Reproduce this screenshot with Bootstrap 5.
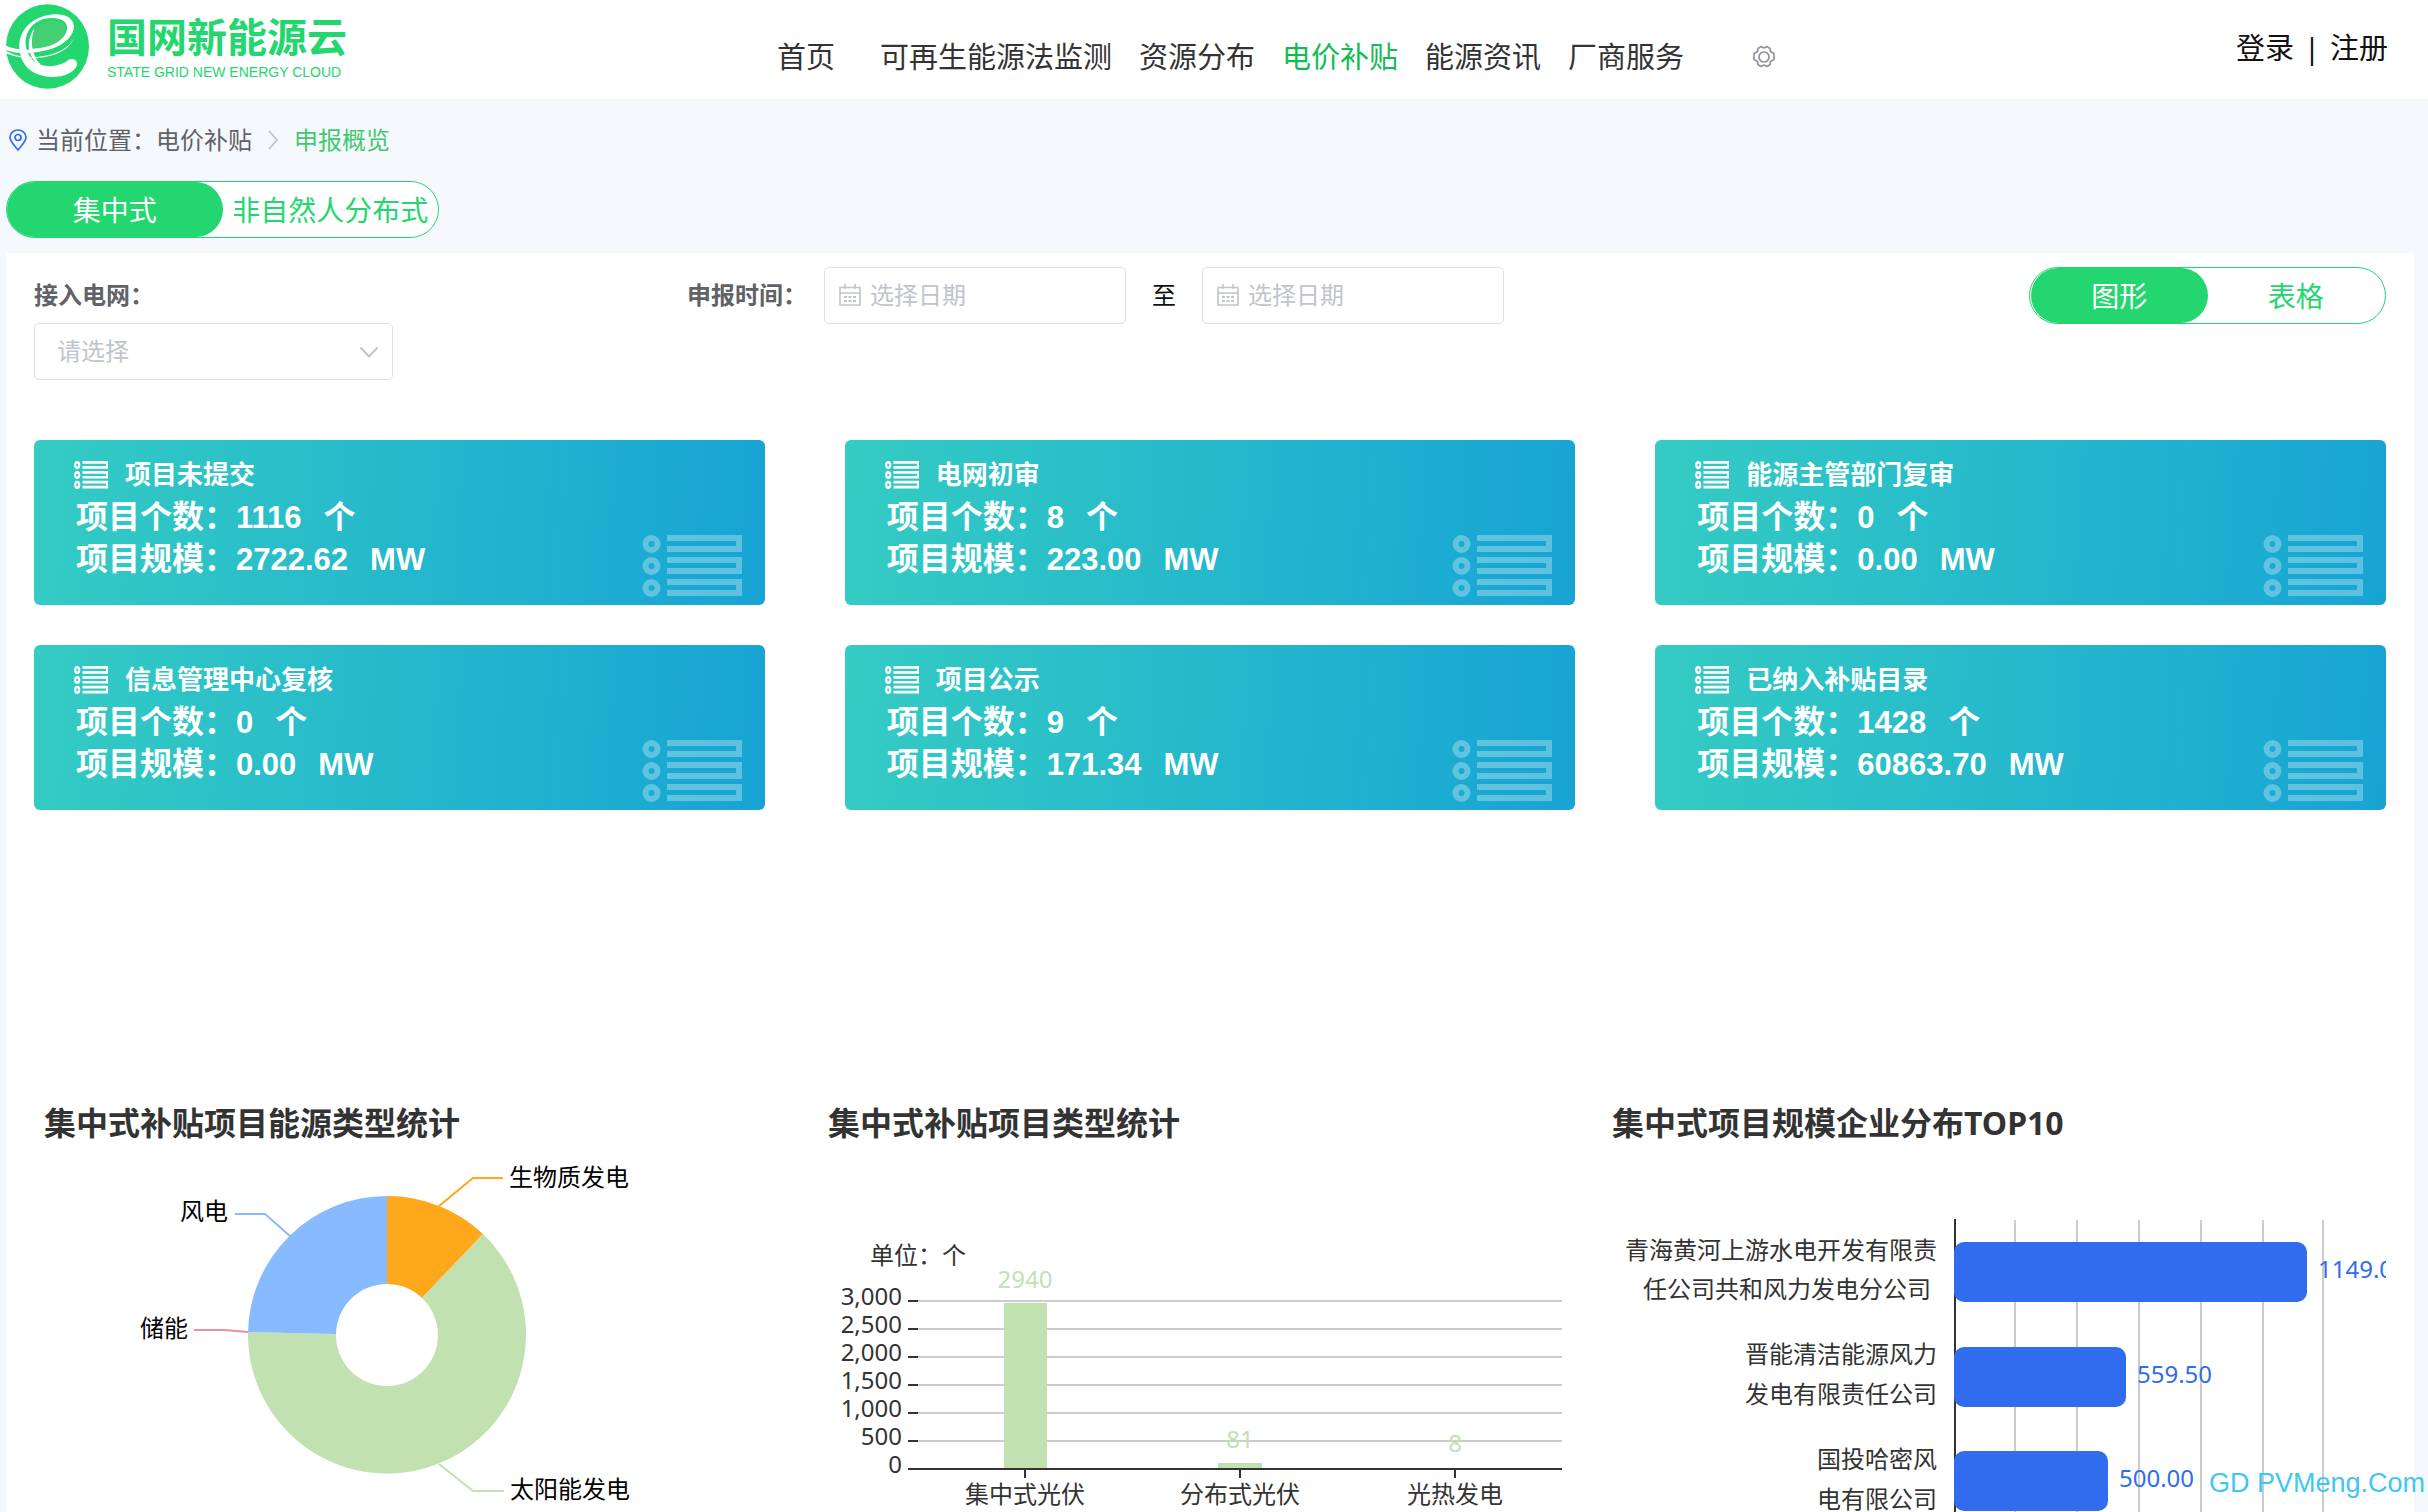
<!DOCTYPE html>
<html lang="zh-CN">
<head>
<meta charset="utf-8">
<meta name="viewport" content="width=device-width, initial-scale=1">
<title>国网新能源云 - 申报概览</title>
<link href="https://cdn.jsdelivr.net/npm/bootstrap@5.3.0/dist/css/bootstrap.min.css" rel="stylesheet">
<style>
:root { --brand: #24d66f; --ink: #333; --muted: #606266; --hint: #c0c4cc; --line: #dcdfe6; }
body { font-family: "Noto Sans", "Noto Sans CJK SC", sans-serif; font-size: 24px; line-height: 36px; color: #111; background: #f5f9fe; overflow-x: hidden; }
a { text-decoration: none; color: inherit; }
.site-head { height: 99px; background: #fff; }
.brand-box { width: 32%; padding: 4px 0 10px 6px; }
.brand-zh { font-size: 40px; line-height: 50px; font-weight: 700; color: var(--brand); }
.brand-en { font: 14px/20px "Liberation Sans", sans-serif; color: var(--brand); }
.brand-words { margin-left: 18px; }
.main-nav { gap: 27px; font-size: 29px; line-height: 44px; color: var(--ink); padding-top: 14px; }
.main-nav .home-link { margin-right: 18px; }
.main-nav .on { color: #12bb53; }
.gear { margin-left: 41px; }
.account { gap: 10px; font-size: 29px; line-height: 44px; padding-right: 40px; margin-bottom: 4px; }
.crumbs { height: 82px; padding-left: 8px; color: var(--muted); }
.crumbs .here { color: #43c870; }
.pill-group { height: 57px; border: 1px solid var(--brand); border-radius: 29px; background: #fff; font-size: 28px; }
.pill-group button { flex: 1 1 0; border: 0; background: none; color: var(--brand); border-radius: 29px; padding: 0; white-space: nowrap; }
.pill-group button.on { background: var(--brand); color: #fff; }
.pills-kind { width: 433px; margin-left: 6px; }
.pills-view { width: 357px; padding: 0 1px; }
.panel { background: #fff; margin: 15px 14px 0 6px; padding: 14px 28px 0; }
.filters label { font-weight: 700; color: var(--muted); line-height: 56px; }
.grid-filter { width: 653px; }
.field-box { height: 57px; border: 1px solid var(--line); border-radius: 5px; background-color: #fff; }
select.field-box { width: 359px; padding: 0 22px 2px; color: var(--hint); appearance: none;
  background: url("data:image/svg+xml,%3Csvg xmlns='http://www.w3.org/2000/svg' width='20' height='12'%3E%3Cpath d='M1.500 1.500l8.500 9 8.500-9' fill='none' stroke='%23c0c4cc' stroke-width='2'/%3E%3C/svg%3E") no-repeat right 13px center; }
.date-box { width: 302px; padding: 0 13px 2px; gap: 8px; }
.date-box input { border: 0; outline: 0; padding: 0; width: 100%; min-width: 0; background: none; }
.date-box input::placeholder { color: var(--hint); opacity: 1; }
.date-box svg { flex: none; }
.date-label { width: 137px; }
.filters .to-label { padding: 0 26px; font-weight: 400; color: #111; }
.stat-grid { grid-template-columns: repeat(3, 1fr); gap: 40px 80px; margin-top: 60px; }
.stat { position: relative; height: 165px; padding: 14px 42px; border-radius: 6px; color: #fff; font-weight: 700; font-size: 32px; line-height: 42px; background: linear-gradient(94deg, #34ccc3, #17a4d4); }
.stat h2 { font-size: 26px; line-height: 41px; font-weight: 700; margin: 0 0 0 -2px; gap: 17px; }
.stat b { font-family: "Liberation Sans", sans-serif; font-size: 31px; line-height: 1; }
.stat b + b, .stat b + span { margin-left: 22px; }
.stat .ghost { position: absolute; right: 23px; bottom: 8px; opacity: .3; }
.charts { margin-top: 291px; }
.charts h2 { font-size: 32px; line-height: 44px; font-weight: 700; color: var(--ink); margin: 0; padding-left: 10px; }
.charts svg { display: block; width: 100%; height: auto; }
svg text { font-size: 24px; }
.stamp { position: absolute; right: 3px; top: 1465px; font: 27px/36px "Liberation Sans", sans-serif; color: #3fc6f5; }
</style>
<script src="https://cdn.jsdelivr.net/npm/bootstrap@5.3.0/dist/js/bootstrap.bundle.min.js"></script>
</head>
<body class="position-relative">
<svg width="0" height="0" class="position-absolute" aria-hidden="true">
  <symbol id="list-mark" viewBox="0 0 100 62">
    <g id="list-row">
      <circle cx="9.500" cy="9" r="6" fill="none" stroke="#fff" stroke-width="6"/>
      <path d="M25 0h75v17H25v-6h69V6H25z" fill="#fff"/>
    </g>
    <use href="#list-row" y="22"/><use href="#list-row" y="44"/>
  </symbol>
  <symbol id="cal-mark" viewBox="0 0 22 22">
    <path d="M1 3.500h20V21H1zM1 9h20M6 0v5M16 0v5" fill="none" stroke="#c0c4cc" stroke-width="1.600"/>
    <path d="M5 13h12M5 17h12" stroke="#c0c4cc" stroke-width="2" stroke-dasharray="3 1.500"/>
  </symbol>
</svg>

<header class="site-head d-flex align-items-center">
  <a href="#" class="brand-box d-flex align-items-center">
    <svg width="83" height="85" viewBox="18 12 250 255" role="img" aria-label="国网新能源云">
      <defs><linearGradient id="sheen" x1="0" x2="1"><stop offset="0" stop-color="#fff"/><stop offset="1" stop-color="#fff" stop-opacity="0"/></linearGradient>
      <linearGradient id="sheen2" x1="0" x2="1"><stop offset="0" stop-color="#fff" stop-opacity="0"/><stop offset=".6" stop-color="#fff"/></linearGradient></defs>
      <ellipse cx="143" cy="139.500" rx="125" ry="127.500" fill="#24d66f"/>
      <path d="M92 142C86 100 112 68 150 63c32-4 50 8 47 32-4 28-40 50-105 47z" fill="#44cf72"/>
      <path d="M100 157c45-4 80-20 98-55-10 22-45 42-102 44z" fill="url(#sheen)"/>
      <path d="M18 150c25 8 45 11 70 9 70-5 122-28 134-72 5-30-22-48-65-44-62 6-106 50-98 110 5 42 35 70 80 77 45 5 80-8 92-32 5-14-8-26-24-19-9 10-22 15-40 18-45 8-78-12-88-52-8-40 12-78 56-89 34-8 68 2 67 28-2 36-48 62-112 65-25 1-52-2-72-12z" fill="#fff"/>
      <path d="M18 160c70 30 185 15 205-48-18 46-95 66-153 58-20-3-38-9-52-18z" fill="#fff"/>
      <path d="M104 84c-32 45-20 103 40 128-46-29-58-80-40-128z" fill="#fff"/>
      <path d="M110 202c28 6 55 2 86-14-18 22-60 34-86 14z" fill="url(#sheen2)"/>
    </svg>
    <span class="brand-words d-flex flex-column">
      <span class="brand-zh">国网新能源云</span>
      <span class="brand-en">STATE GRID NEW ENERGY CLOUD</span>
    </span>
  </a>
  <nav class="main-nav d-flex align-items-center text-nowrap" aria-label="主导航">
    <a href="#" class="home-link">首页</a>
    <a href="#">可再生能源法监测</a>
    <a href="#">资源分布</a>
    <a href="#" class="on">电价补贴</a>
    <a href="#">能源资讯</a>
    <a href="#">厂商服务</a>
    <a href="#" class="gear d-flex" aria-label="设置"><svg width="24" height="24" viewBox="0 0 24 24" fill="none" stroke="#909399" stroke-width="1.700"><circle cx="12" cy="12" r="5"/><path d="M9 1.500l3 1.500 3-1.500 3 2 .5 3 3.500 2v6l-3.500 2-.5 3-3 2-3-1.500-3 1.500-3-2-.5-3-3.500-2v-6l3.500-2 .5-3z" stroke-linejoin="round"/></svg></a>
  </nav>
  <div class="account d-flex ms-auto text-nowrap"><a href="#">登录</a><span>|</span><a href="#">注册</a></div>
</header>

<nav class="crumbs d-flex align-items-center" aria-label="当前位置">
  <svg width="20" height="22" viewBox="0 0 20 22" fill="none" stroke="#2f6fee" stroke-width="1.700"><path d="M10 21C5 15 2 12 2 8.500a8 7.500 0 0 1 16 0C18 12 15 15 10 21z"/><circle cx="10" cy="8.500" r="3"/></svg>
  <span class="ms-2">当前位置：</span><a href="#">电价补贴</a>
  <svg class="mx-3" width="10" height="20" viewBox="0 0 10 20" fill="none" stroke="#c0c4cc" stroke-width="1.800"><path d="M1 1l8 9-8 9"/></svg>
  <span class="here">申报概览</span>
</nav>
<div class="pill-group pills-kind d-flex">
  <button type="button" class="on">集中式</button><button type="button">非自然人分布式</button>
</div>

<main class="panel">
  <form class="filters d-flex align-items-start">
    <div class="grid-filter d-flex flex-column align-items-start">
      <label for="grid">接入电网：</label>
      <select id="grid" class="field-box"><option>请选择</option></select>
    </div>
    <label for="from" class="date-label">申报时间：</label>
    <div class="field-box date-box d-flex align-items-center"><svg width="24" height="22"><use href="#cal-mark"/></svg><input id="from" type="text" placeholder="选择日期"></div>
    <label for="to" class="to-label">至</label>
    <div class="field-box date-box d-flex align-items-center"><svg width="24" height="22"><use href="#cal-mark"/></svg><input id="to" type="text" placeholder="选择日期"></div>
    <div class="pill-group pills-view d-flex ms-auto">
      <button type="button" class="on">图形</button><button type="button">表格</button>
    </div>
  </form>

  <section class="stat-grid d-grid">
    <article class="stat"><h2 class="d-flex align-items-center"><svg width="34" height="28" viewBox="0 0 100 62" preserveAspectRatio="none"><use href="#list-mark" width="100" height="62"/></svg>项目未提交</h2><div>项目个数：<b>1116</b><span>个</span></div><div>项目规模：<b>2722.62</b><b>MW</b></div><svg class="ghost" width="100" height="62"><use href="#list-mark"/></svg></article>
    <article class="stat"><h2 class="d-flex align-items-center"><svg width="34" height="28" viewBox="0 0 100 62" preserveAspectRatio="none"><use href="#list-mark" width="100" height="62"/></svg>电网初审</h2><div>项目个数：<b>8</b><span>个</span></div><div>项目规模：<b>223.00</b><b>MW</b></div><svg class="ghost" width="100" height="62"><use href="#list-mark"/></svg></article>
    <article class="stat"><h2 class="d-flex align-items-center"><svg width="34" height="28" viewBox="0 0 100 62" preserveAspectRatio="none"><use href="#list-mark" width="100" height="62"/></svg>能源主管部门复审</h2><div>项目个数：<b>0</b><span>个</span></div><div>项目规模：<b>0.00</b><b>MW</b></div><svg class="ghost" width="100" height="62"><use href="#list-mark"/></svg></article>
    <article class="stat"><h2 class="d-flex align-items-center"><svg width="34" height="28" viewBox="0 0 100 62" preserveAspectRatio="none"><use href="#list-mark" width="100" height="62"/></svg>信息管理中心复核</h2><div>项目个数：<b>0</b><span>个</span></div><div>项目规模：<b>0.00</b><b>MW</b></div><svg class="ghost" width="100" height="62"><use href="#list-mark"/></svg></article>
    <article class="stat"><h2 class="d-flex align-items-center"><svg width="34" height="28" viewBox="0 0 100 62" preserveAspectRatio="none"><use href="#list-mark" width="100" height="62"/></svg>项目公示</h2><div>项目个数：<b>9</b><span>个</span></div><div>项目规模：<b>171.34</b><b>MW</b></div><svg class="ghost" width="100" height="62"><use href="#list-mark"/></svg></article>
    <article class="stat"><h2 class="d-flex align-items-center"><svg width="34" height="28" viewBox="0 0 100 62" preserveAspectRatio="none"><use href="#list-mark" width="100" height="62"/></svg>已纳入补贴目录</h2><div>项目个数：<b>1428</b><span>个</span></div><div>项目规模：<b>60863.70</b><b>MW</b></div><svg class="ghost" width="100" height="62"><use href="#list-mark"/></svg></article>
  </section>

  <section class="charts row g-0">
    <div class="col-4">
      <h2>集中式补贴项目能源类型统计</h2>
      <svg viewBox="0 0 784 367" role="img" aria-label="能源类型统计">
        <!-- ring: outer radius 139, inner radius 51 -->
        <path d="M353 51A139 139 0 0 1 449 89L388 153A51 51 0 0 0 353 139z" fill="#ffa81c"/>
        <path d="M449 89A139 139 0 1 1 214 187L302 189A51 51 0 1 0 388 153z" fill="#c1e1b1"/>
        <path d="M214 187A139 139 0 0 1 353 51V139A51 51 0 0 0 302 189z" fill="#88baff"/>
        <g fill="none" stroke-width="2">
          <path d="M405 61L439 33H469" stroke="#ffa81c"/>
          <path d="M405 319L439 346H470" stroke="#c1e1b1"/>
          <path d="M256 91L231 69H201" stroke="#88baff"/>
          <path d="M214 187L190 185H160" stroke="#e88fa3"/>
        </g>
        <g fill="#000"><text x="475" y="41">生物质发电</text><text x="476" y="353">太阳能发电</text>
        <text x="194" y="75" text-anchor="end">风电</text><text x="154" y="192" text-anchor="end">储能</text></g>
      </svg>
    </div>
    <div class="col-4">
      <h2>集中式补贴项目类型统计</h2>
      <svg viewBox="0 0 784 367" role="img" aria-label="项目类型统计">
        <path d="M100 156H744M100 184H744M100 212H744M100 240H744M100 268H744M100 296H744" stroke="#ccc" stroke-width="2"/>
        <g fill="#c1e1b1"><path d="M186 158h43v166h-43zM400 318h44v6h-44zM615 323h44v1h-44z"/>
        <g text-anchor="middle"><text x="207" y="143">2940</text><text x="422" y="303">81</text><text x="637" y="307">8</text></g></g>
        <path d="M90 156h10M90 184h10M90 212h10M90 240h10M90 268h10M90 296h10M90 324H744M207 324v9M422 324v9M637 324v9" stroke="#333" stroke-width="2"/>
        <g fill="#333"><text x="52" y="119">单位：个</text>
        <g text-anchor="end"><text x="84" y="160">3,000</text><text x="84" y="188">2,500</text><text x="84" y="216">2,000</text><text x="84" y="244">1,500</text><text x="84" y="272">1,000</text><text x="84" y="300">500</text><text x="84" y="328">0</text></g>
        <g text-anchor="middle"><text x="207" y="358">集中式光伏</text><text x="422" y="358">分布式光伏</text><text x="637" y="358">光热发电</text></g></g>
      </svg>
    </div>
    <div class="col-4">
      <h2>集中式项目规模企业分布TOP10</h2>
      <svg viewBox="0 0 784 367" role="img" aria-label="企业分布TOP10">
        <path d="M413 75V367M475 75V367M537 75V367M599 75V367M661 75V367M721 75V367" stroke="#ccc" stroke-width="2"/>
        <path d="M353 74V367" stroke="#333" stroke-width="2"/>
        <g fill="#316cee"><rect x="352" y="97" width="353" height="60" rx="10"/><rect x="352" y="202" width="172" height="60" rx="10"/><rect x="352" y="306" width="154" height="60" rx="10"/>
        <text x="716" y="133">1149.00</text><text x="535" y="238">559.50</text><text x="517" y="342">500.00</text></g>
        <g fill="#333" text-anchor="end"><text x="335" y="114">青海黄河上游水电开发有限责</text><text x="329" y="153">任公司共和风力发电分公司</text><text x="335" y="218">晋能清洁能源风力</text><text x="335" y="258">发电有限责任公司</text><text x="335" y="323">国投哈密风</text><text x="335" y="363">电有限公司</text></g>
      </svg>
    </div>
  </section>
</main>
<div class="stamp">GD PVMeng.Com</div>
</body>
</html>
